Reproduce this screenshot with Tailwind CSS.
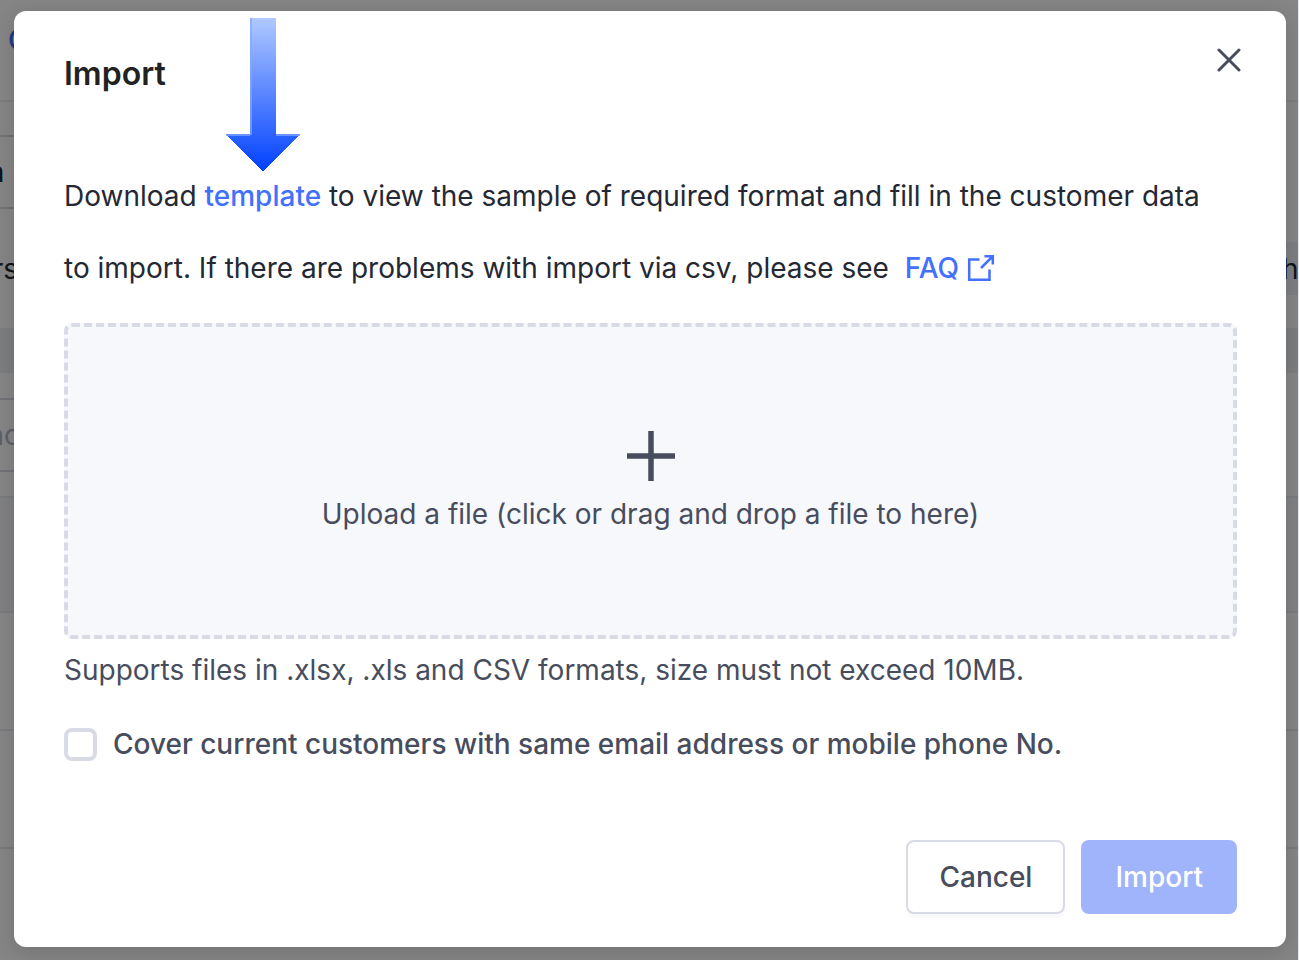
<!DOCTYPE html>
<html lang="en">

<head>
      <meta charset="UTF-8">
      <meta name="viewport" content="width=device-width, initial-scale=1.0">
      <title>Import customers</title>
      <script src="https://cdn.jsdelivr.net/npm/@tailwindcss/browser@4"></script>
</head>

<body class="font-['Inter',sans-serif] text-[28px] leading-9 text-[#242833]">
      <div class="relative min-h-screen overflow-hidden border-r border-gray-200 bg-white">
            <!-- Page behind the dialog -->
            <div class="absolute inset-0 flex flex-col overflow-hidden" aria-hidden="true">
                  <header class="flex h-[102px] shrink-0 items-start border-b-2 border-[#f0f0f4] pt-[22px] pl-2 font-medium text-[#4270ff]">C</header>
                  <div class="mt-[33px] mr-[40px] flex h-[74px] shrink-0 items-center justify-between border-y-2 border-[#d8dae5]">
                        <div class="flex w-[18px] shrink-0 items-center justify-end gap-2"><b class="font-semibold">n</b><span class="text-xl text-gray-400">:</span></div>
                  </div>
                  <div class="mt-[33px] flex h-[53px] shrink-0 items-center justify-between">
                        <div class="flex w-[18px] justify-end">rs</div>
                        <div class="flex h-full w-[20px] items-center bg-[#f0f2fa] pl-1">h</div>
                  </div>
                  <div class="mt-[33px] h-[45px] shrink-0 bg-[#eef0f3]"></div>
                  <div class="mt-[25px] mr-[40px] flex h-[74px] shrink-0 items-center border-y-2 border-[#d8dae5] text-[#b5b8c6]">
                        <div class="flex w-[20px] justify-end">nc</div>
                  </div>
                  <div class="mt-[24px] h-[117px] shrink-0 border-y-2 border-[#eaecf4] bg-[#f5f7fc]"></div>
                  <div class="h-[118px] shrink-0 border-b-2 border-[#eaecf4]"></div>
                  <div class="h-[118px] shrink-0 border-b-2 border-[#eaecf4]"></div>
            </div>
            <div class="absolute inset-0 bg-black/48"></div>

            <!-- Import dialog -->
            <div role="dialog" aria-modal="true" aria-labelledby="dialogTitle"
                  class="relative mt-[11px] mr-3 mb-[13px] ml-[14px] rounded-xl bg-white pt-[37px] pr-[49px] pb-[33px] pl-[50px] shadow-[0_4px_20px_rgba(0,0,0,0.15)]">
                  <div class="flex items-start justify-between">
                        <h1 id="dialogTitle" class="mt-1 text-[32px] leading-[44px] font-semibold text-[#222]">Import</h1>
                        <button type="button" aria-label="Close" class="-mr-1 text-[#474d5c]">
                              <svg class="size-6" viewBox="0 0 24 24" fill="none" stroke="currentColor" stroke-width="3">
                                    <path d="M2 2 22 22M22 2 2 22" stroke-linecap="round" />
                              </svg>
                        </button>
                  </div>

                  <p class="mt-[64px] pr-5 leading-[72px]">Download
                        <a href="#" class="relative font-medium text-[#4270ff]">template<svg class="absolute bottom-10 left-1/2 h-[156px] w-[76px] -translate-x-1/2" viewBox="0 0 76 156" shape-rendering="crispEdges" aria-hidden="true">
                                    <defs>
                                          <linearGradient id="arrowFill" x1="0" y1="0" x2="0" y2="1">
                                                <stop offset="0" stop-color="#b0c9ff" />
                                                <stop offset="1" stop-color="#0040ff" />
                                          </linearGradient>
                                    </defs>
                                    <path d="M25 1H51V117H75L38 155 1 117H25Z" fill="url(#arrowFill)" />
                                    <path d="M26 1V118M1 118H25M51 118H75" stroke="#85a8ff" stroke-width="2" stroke-opacity=".7" />
                              </svg></a>
                        to view the sample of required format and fill in the customer data to import. If there are problems with import via csv, please see&nbsp;
                        <a href="#" class="inline-flex items-center gap-2 font-medium text-[#4270ff]">FAQ
                              <svg class="size-[28px]" viewBox="0 0 28 28" fill="none" stroke="currentColor" stroke-width="2.5">
                                    <path d="M12.500 5.500H2.200V25.800H22.500V15.500" />
                                    <path d="M17.500 2.200H25.800V10.500M25.500 2.500 14 14" />
                              </svg></a>
                  </p>

                  <button type="button" class="mt-[19px] flex h-[316px] w-full flex-col items-center justify-center gap-[15px] rounded-lg border-4 border-dashed border-[#d8dae5] bg-[#f7f8fc] text-[#474d5c]">
                        <svg class="h-[50px] w-12" viewBox="0 0 48 50" fill="none" stroke="currentColor" stroke-width="5.500">
                              <path d="M24 0V50M0 25H48" />
                        </svg>
                        <span>Upload a file (click or drag and drop a file to here)</span>
                  </button>
                  <p class="mt-[13px] text-[#474d5c]">Supports files in .xlsx, .xls and CSV formats, size must not exceed 10MB.</p>

                  <label class="mt-[38px] flex items-center gap-4 font-medium text-[#474d5c]">
                        <input type="checkbox" class="size-[33px] shrink-0 appearance-none rounded-lg border-4 border-[#d8dae5] bg-white checked:bg-[#4270ff]">
                        Cover current customers with same email address or mobile phone No.
                  </label>

                  <div class="mt-[78px] flex justify-end gap-4">
                        <button type="button" class="h-[74px] rounded-lg border-2 border-[#d8dae5] bg-white px-[31px] font-medium text-[#474d5c] shadow-[0_4px_0_rgba(0,0,0,0.02)]">Cancel</button>
                        <button type="button" class="h-[74px] rounded-lg bg-[#a0b4fb] px-[34px] font-medium text-white">Import</button>
                  </div>
            </div>
      </div>
</body>

</html>
